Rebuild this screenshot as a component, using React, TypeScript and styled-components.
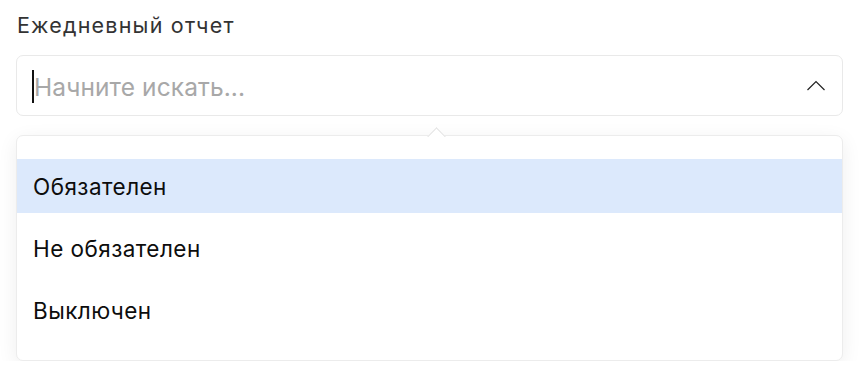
import React from "react";
import styled, { createGlobalStyle } from "styled-components";

const Global = createGlobalStyle`
  html, body { margin: 0; padding: 0; background: #ffffff; }
  body { font-family: Inter, "Noto Sans", sans-serif; -webkit-font-smoothing: antialiased; }
`;

const Page = styled.div`
  padding: 10px 25px 0 16px;
  width: 868px;
  box-sizing: border-box;
`;

const Label = styled.div`
  font-size: 21.5px;
  letter-spacing: 1.2px;
  line-height: 30px;
  color: #333333;
  padding-left: 1px;
  margin-bottom: 15px;
`;

const Field = styled.div`
  height: 61px;
  box-sizing: border-box;
  border: 1px solid #e9e9e9;
  border-radius: 7px;
  display: flex;
  align-items: center;
  padding: 0 16px 0 15px;
`;

const Caret = styled.span`
  width: 2px;
  height: 33px;
  background: #111;
  margin-top: 2px;
`;

const Placeholder = styled.span`
  flex: 1;
  font-size: 24.5px;
  letter-spacing: 0.1px;
  color: #a8a8a8;
  margin-top: 2px;
`;

const Menu = styled.div`
  position: relative;
  margin-top: 19px;
  border: 1px solid #ececec;
  border-radius: 7px;
  background: #fff;
  box-shadow: 0 5px 20px rgba(0, 0, 0, 0.07);
  padding: 23px 0 23px;
  display: flex;
  flex-direction: column;
  gap: 8px;
  &::before {
    content: "";
    position: absolute;
    top: -6px;
    left: 413px;
    width: 12px;
    height: 12px;
    background: #fff;
    border-left: 1px solid #e4e4e4;
    border-top: 1px solid #e4e4e4;
    transform: rotate(45deg);
  }
`;

const Option = styled.div<{ $active?: boolean }>`
  height: 54px;
  display: flex;
  align-items: center;
  padding-left: 16px;
  font-size: 22.5px;
  letter-spacing: 0.45px;
  color: #0d0d0d;
  background: ${(p) => (p.$active ? "#dce9fc" : "transparent")};
`;

const Chevron = () => (
  <svg width="20" height="12" viewBox="0 0 20 12" fill="none">
    <path d="M1.5 10L10 1.5L18.5 10" stroke="#222" strokeWidth="1.2" />
  </svg>
);

export default function App() {
  return (
    <Page>
      <Global />
      <Label>Ежедневный отчет</Label>
      <Field>
        <Caret />
        <Placeholder>Начните искать...</Placeholder>
        <Chevron />
      </Field>
      <Menu>
        <Option $active>Обязателен</Option>
        <Option>Не обязателен</Option>
        <Option>Выключен</Option>
      </Menu>
    </Page>
  );
}
